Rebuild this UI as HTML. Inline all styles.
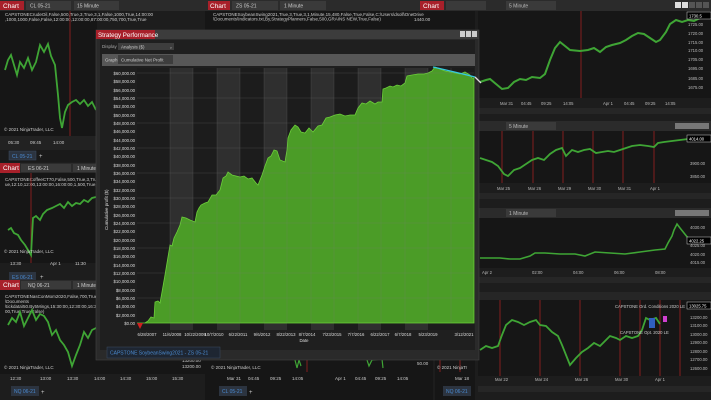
<!DOCTYPE html>
<html><head><meta charset="utf-8"><style>
html,body{margin:0;padding:0;background:#1c1c1c;width:711px;height:400px;overflow:hidden;font-family:"Liberation Sans",sans-serif}
svg{display:block}
text{font-family:"Liberation Sans",sans-serif}
</style></head><body>
<svg width="711" height="400" viewBox="0 0 711 400" xmlns="http://www.w3.org/2000/svg">
<rect width="711" height="400" fill="#1d1d1d"/>
<g font-size="4.5" fill="#ccc">
<rect x="0" y="0" width="205" height="11" fill="#2b2b2b"/>
<rect x="0" y="1" width="24" height="9" fill="#a8202a"/><text x="3" y="8" font-size="6.5" fill="#fff">Chart</text>
<rect x="26" y="1" width="45" height="9" fill="#3a3a3a"/><text x="30" y="7.5" font-size="5">CL 05-21</text>
<rect x="74" y="1" width="45" height="9" fill="#3a3a3a"/><text x="77" y="7.5" font-size="5">15 Minute</text>
<rect x="0" y="11" width="97" height="125" fill="#161616"/>
<text x="5" y="16">CAPSTONECrudeOil,False,500,True,3,True,3,1,False,1000,True,14:00:00</text>
<text x="5" y="21">,1000,1000,False,False,12:00:00,12:00:00,87:00:00,750,700,True,True</text>
<line x1="70" y1="11" x2="70" y2="136" stroke="#a02020" stroke-width="0.8"/>
<polyline fill="none" stroke="#3fa535" stroke-width="1.8" points="5,70 8,60 11,55 14,65 17,75 20,62 24,68 28,58 32,70 36,62 40,45 44,52 48,44 51,56 55,65 58,95 60,118 62,128 65,112 68,105 72,102 76,100 80,104 84,100 88,106 92,102 96,110"/>
<text x="4" y="131" font-size="4.5">© 2021 NinjaTrader, LLC</text>
<rect x="0" y="136" width="97" height="14" fill="#222"/>
<text x="8" y="144">05:30</text><text x="30" y="144">09:45</text><text x="53" y="144">14:00</text>
<rect x="0" y="150" width="97" height="12" fill="#1a1a1a"/>
<rect x="9" y="151" width="27" height="9" fill="#2c3440" stroke="#3a4a60" stroke-width="0.5"/><text x="12" y="158" font-size="5" fill="#4a8ad0">CL 05-21</text>
<text x="39" y="158" font-size="6">+</text>
<rect x="0" y="163" width="97" height="10" fill="#2b2b2b"/>
<rect x="0" y="163" width="20" height="10" fill="#a8202a"/><text x="3" y="170" font-size="6.5" fill="#fff">Chart</text>
<rect x="21" y="164" width="50" height="8" fill="#3a3a3a"/><text x="28" y="170" font-size="5">ES 06-21</text>
<rect x="73" y="164" width="24" height="8" fill="#3a3a3a"/><text x="77" y="170" font-size="5">1 Minute</text>
<rect x="0" y="173" width="97" height="90" fill="#161616"/>
<text x="5" y="181">CAPSTONECoffeeCT70,False,500,True,3,True,3,1,M</text>
<text x="5" y="186">ue,12:10,12:00,13:00:00,16:00:00,1,500,True,600,F</text>
<line x1="31" y1="173" x2="31" y2="263" stroke="#a02020" stroke-width="0.8"/>
<polyline fill="none" stroke="#3fa535" stroke-width="1.8" points="8,230 11,228 14,233 18,235 21,240 25,245 28,250 31,255 33,218 36,216 40,220 43,214 47,210 52,208 56,206 60,204 64,208 68,202 72,206 76,203 80,204 84,200 88,202 92,198 96,197"/>
<text x="4" y="253">© 2021 NinjaTrader, LLC</text>
<text x="10" y="265">13:30</text><text x="50" y="265">Apr 1</text><text x="75" y="265">11:30</text>
<rect x="9" y="272" width="27" height="9" fill="#2c3440"/><text x="12" y="279" font-size="5" fill="#4a8ad0">ES 06-21</text>
<text x="40" y="279" font-size="6">+</text>
<rect x="0" y="280" width="205" height="10" fill="#2b2b2b"/>
<rect x="0" y="280" width="20" height="10" fill="#a8202a"/><text x="3" y="287" font-size="6.5" fill="#fff">Chart</text>
<rect x="21" y="281" width="50" height="8" fill="#3a3a3a"/><text x="28" y="287" font-size="5">NQ 06-21</text>
<rect x="73" y="281" width="24" height="8" fill="#3a3a3a"/><text x="77" y="287" font-size="5">1 Minute</text>
<rect x="0" y="290" width="205" height="84" fill="#161616"/>
<text x="5" y="298">CAPSTONENasConMom2020,False,700,True,3,1,F</text>
<text x="5" y="303">\Documents</text>
<text x="5" y="308">\tickdata\50.By5Mings,15:30:00,12:30:00,16:30:00,</text>
<text x="5" y="313">00,True,True,False)</text>
<polyline fill="none" stroke="#3fa535" stroke-width="1.8" points="8,325 12,318 16,322 20,312 24,326 28,318 32,310 36,320 40,314 44,316 48,322 52,335 56,330 60,340 64,345 68,352 72,366 76,355 80,345 84,332 88,338 92,330 96,328 100,325"/>
<text x="4" y="369">© 2021 NinjaTrader, LLC</text>
<text x="182" y="362">13200.00</text><text x="182" y="368">13200.00</text>
<text x="10" y="380">12:30</text><text x="40" y="380">13:00</text><text x="67" y="380">13:30</text><text x="94" y="380">14:00</text><text x="120" y="380">14:30</text><text x="146" y="380">15:00</text><text x="172" y="380">15:30</text>
<rect x="11" y="386" width="28" height="10" fill="#2c3440"/><text x="14" y="393" font-size="5" fill="#4a8ad0">NQ 06-21</text>
<text x="41" y="394" font-size="6">+</text>
</g>
<g font-size="4.5" fill="#ccc">
<rect x="205" y="0" width="270" height="11" fill="#2b2b2b"/>
<rect x="208" y="1" width="22" height="9" fill="#a8202a"/><text x="210" y="8" font-size="6.5" fill="#fff">Chart</text>
<rect x="232" y="1" width="46" height="9" fill="#3a3a3a"/><text x="236" y="7.5" font-size="5">ZS 05-21</text>
<rect x="280" y="1" width="46" height="9" fill="#3a3a3a"/><text x="284" y="7.5" font-size="5">1 Minute</text>
<rect x="205" y="11" width="270" height="20" fill="#161616"/>
<text x="213" y="16">CAPSTONESoybeanSwing2021,True,3,True,3,1,Minute,15,480,False,True,False,C:\Users\dsoll\OneDrive</text>
<text x="213" y="20.5">\Documents\Indicators.txt,By,StrategyPlanners,False,500,GRAINS NEW,True,False)</text>
<text x="414" y="21">1440.00</text>
<rect x="205" y="352" width="228" height="48" fill="#161616"/>
<polyline fill="none" stroke="#3fa535" stroke-width="1.2" points="295,360 297,368 299,360 301,366"/>
<polyline fill="none" stroke="#3fa535" stroke-width="1.2" points="367,360 369,366 372,360 382,359 383,368"/>
<line x1="307" y1="352" x2="307" y2="372" stroke="#a02020" stroke-width="0.8"/>
<text x="211" y="369">© 2021 NinjaTrader, LLC</text>
<text x="417" y="365">50.00</text>
<text x="227" y="380">Mar 31</text><text x="248" y="380">04:45</text><text x="270" y="380">09:25</text><text x="292" y="380">14:05</text><text x="335" y="380">Apr 1</text><text x="355" y="380">04:45</text><text x="375" y="380">09:25</text><text x="397" y="380">14:05</text>
<rect x="219" y="386" width="28" height="10" fill="#2c3440"/><text x="222" y="393" font-size="5" fill="#4a8ad0">CL 05-21</text>
<text x="249" y="394" font-size="6">+</text>
<rect x="435" y="352" width="40" height="48" fill="#161616"/>
<line x1="440" y1="352" x2="440" y2="372" stroke="#a02020" stroke-width="0.8"/><line x1="460" y1="352" x2="460" y2="372" stroke="#a02020" stroke-width="0.8"/>
<text x="437" y="369">© 2021 NinjaTr</text><text x="455" y="380">Mar 18</text>
<rect x="443" y="386" width="28" height="10" fill="#2c3440"/><text x="446" y="393" font-size="5" fill="#4a8ad0">NQ 06-21</text>
</g>
<g font-size="4.2" fill="#bbb">
<rect x="420" y="0" width="291" height="11" fill="#2b2b2b"/>
<rect x="420" y="1" width="24" height="9" fill="#a8202a"/><text x="423" y="8" font-size="6.5" fill="#fff">Chart</text>
<rect x="446" y="1" width="40" height="9" fill="#3a3a3a"/>
<rect x="506" y="1" width="50" height="9" fill="#3a3a3a"/><text x="509" y="7.5" font-size="5">5 Minute</text>
<g fill="#ddd"><rect x="675" y="2" width="6" height="6"/><rect x="682" y="2" width="6" height="6"/><rect x="689" y="2" width="6" height="6" fill="#555"/><rect x="696" y="2" width="6" height="6" fill="#555"/><rect x="703" y="2" width="6" height="6" fill="#555"/></g>
<rect x="478" y="11" width="233" height="87" fill="#161616"/>
<line x1="581" y1="11" x2="581" y2="98" stroke="#a02020" stroke-width="0.8"/>
<polyline fill="none" stroke="#3fa535" stroke-width="2" points="480,82 486,80 490,79 496,84 502,89 508,88 514,82 520,79 526,80 532,77 540,78 545,74 550,60 555,48 560,42 565,46 570,50 580,51 588,50 594,48 600,52 606,47 612,45 620,43 626,40 632,36 638,33 644,34 650,38 656,42 660,40 666,32 670,24 676,20 682,22 688,20 694,21 700,18 705,15 709,16"/>
<g><text x="688" y="26">1725.00</text><text x="688" y="35">1720.00</text><text x="688" y="44">1715.00</text><text x="688" y="52">1710.00</text><text x="688" y="61">1705.00</text><text x="688" y="70">1695.00</text><text x="688" y="80">1685.00</text><text x="688" y="89">1675.00</text></g>
<rect x="687" y="12" width="24" height="7" fill="#000" stroke="#ccc" stroke-width="0.5"/><text x="689" y="17.5" fill="#fff">1730.5</text>
<text x="500" y="105">Mar 31</text><text x="521" y="105">04:45</text><text x="541" y="105">09:25</text><text x="563" y="105">14:05</text><text x="603" y="105">Apr 1</text><text x="624" y="105">04:45</text><text x="645" y="105">09:25</text><text x="665" y="105">14:05</text>
<rect x="478" y="108" width="233" height="6" fill="#262626"/>
<rect x="478" y="121" width="233" height="10" fill="#2b2b2b"/>
<rect x="506" y="122" width="50" height="8" fill="#3a3a3a"/><text x="509" y="128" font-size="5">5 Minute</text>
<rect x="675" y="123" width="34" height="6" fill="#777"/>
<rect x="478" y="131" width="233" height="52" fill="#161616"/>
<g stroke="#a02020" stroke-width="0.8"><line x1="502" y1="131" x2="502" y2="183"/><line x1="533" y1="131" x2="533" y2="183"/><line x1="563" y1="131" x2="563" y2="183"/><line x1="593" y1="131" x2="593" y2="183"/><line x1="623" y1="131" x2="623" y2="183"/><line x1="654" y1="131" x2="654" y2="183"/></g>
<polyline fill="none" stroke="#3fa535" stroke-width="1.8" points="480,158 486,160 492,162 498,166 504,174 508,176 514,170 520,168 526,164 532,160 538,158 544,160 550,154 556,150 562,148 566,156 572,150 578,152 584,150 590,149 596,153 602,152 608,151 614,152 620,150 626,148 632,146 640,145 648,146 654,147 658,143 664,142 672,141 680,140 688,139 692,136"/>
<rect x="687" y="135" width="24" height="7" fill="#000" stroke="#ccc" stroke-width="0.5"/><text x="689" y="140.5" fill="#fff">4014.00</text>
<text x="690" y="165">3900.00</text><text x="690" y="178">3850.00</text>
<text x="497" y="190">Mar 25</text><text x="528" y="190">Mar 26</text><text x="558" y="190">Mar 29</text><text x="588" y="190">Mar 30</text><text x="618" y="190">Mar 31</text><text x="650" y="190">Apr 1</text>
<rect x="478" y="193" width="233" height="6" fill="#262626"/>
<rect x="478" y="208" width="233" height="10" fill="#2b2b2b"/>
<rect x="506" y="209" width="50" height="8" fill="#3a3a3a"/><text x="509" y="215" font-size="5">1 Minute</text>
<rect x="675" y="210" width="34" height="6" fill="#777"/>
<rect x="478" y="218" width="233" height="50" fill="#161616"/>
<polyline fill="none" stroke="#3fa535" stroke-width="1.6" points="480,258 500,258 510,259 520,259 530,256 535,253 545,253 560,254 575,254 585,256 595,252 610,253 625,254 640,252 655,250 665,249 668,243 672,236 674,230 677,224 680,228 684,233 688,238 690,240"/>
<rect x="687" y="237" width="24" height="7" fill="#000" stroke="#ccc" stroke-width="0.5"/><text x="689" y="242.5" fill="#fff">4022.25</text>
<text x="690" y="229">4030.00</text><text x="690" y="247">4025.00</text><text x="690" y="256">4020.00</text><text x="690" y="264">4015.00</text>
<text x="482" y="274">Apr 2</text><text x="532" y="274">02:00</text><text x="573" y="274">04:00</text><text x="614" y="274">06:00</text><text x="655" y="274">08:00</text>
<rect x="478" y="277" width="233" height="6" fill="#262626"/>
<rect x="478" y="292" width="233" height="8" fill="#262626"/>
<rect x="478" y="300" width="233" height="76" fill="#161616"/>
<g stroke="#a02020" stroke-width="0.8"><line x1="500" y1="300" x2="500" y2="376"/><line x1="540" y1="300" x2="540" y2="376"/><line x1="580" y1="300" x2="580" y2="376"/><line x1="620" y1="300" x2="620" y2="376"/><line x1="640" y1="300" x2="640" y2="376"/><line x1="660" y1="300" x2="660" y2="376"/><line x1="680" y1="300" x2="680" y2="376"/></g>
<polyline fill="none" stroke="#3fa535" stroke-width="1.8" points="480,350 486,346 492,348 498,346 502,335 506,325 512,320 518,322 524,325 530,322 536,320 540,325 546,326 552,332 558,336 562,345 566,355 570,365 576,358 582,352 588,348 594,343 600,346 606,340 610,336 616,338 620,340 626,336 632,338 638,336 642,330 646,318 650,320 656,318 660,324"/>
<rect x="649" y="318" width="6" height="10" fill="#3060c0"/><rect x="663" y="316" width="4" height="6" fill="#d040d0"/>
<text x="615" y="308" fill="#ccc">CAPSTONE Ord. Conditions 2020 LE</text>
<text x="620" y="334" fill="#ccc">CAPSTONE Opt. 2020 LE</text>
<rect x="687" y="302" width="24" height="7" fill="#000" stroke="#ccc" stroke-width="0.5"/><text x="689" y="307.5" fill="#fff">13025.75</text>
<text x="690" y="319">13200.00</text><text x="690" y="327">13100.00</text><text x="690" y="336">13000.00</text><text x="690" y="344">12900.00</text><text x="690" y="353">12800.00</text><text x="690" y="361">12700.00</text><text x="690" y="370">12600.00</text>
<text x="495" y="381">Mar 22</text><text x="535" y="381">Mar 24</text><text x="575" y="381">Mar 26</text><text x="615" y="381">Mar 30</text><text x="655" y="381">Apr 1</text>
<rect x="478" y="386" width="233" height="6" fill="#262626"/>
</g>
<rect x="96" y="30" width="383" height="330" fill="#2a2a2a" stroke="#444" stroke-width="0.6"/>
<rect x="96" y="30" width="383" height="9" fill="#3c3c3c"/>
<rect x="96" y="30" width="59" height="9" fill="#a8202a"/>
<text x="98" y="37" font-size="6.2" fill="#fff">Strategy Performance</text>
<g fill="#ccc"><rect x="460" y="31" width="5" height="6"/><rect x="466" y="31" width="5" height="6"/><rect x="472" y="31" width="5" height="6"/></g>
<rect x="100" y="40" width="375" height="310" fill="#1f1f1f"/>
<text x="102" y="48" font-size="4.5" fill="#aaa">Display</text>
<rect x="118" y="43" width="56" height="7" fill="#3d3d3d"/><text x="121" y="48.5" font-size="4.5" fill="#ccc">Analysis ($)</text><text x="169" y="48.5" font-size="4.5" fill="#ccc">⌄</text>
<rect x="102" y="54" width="373" height="12" fill="#575757"/>
<text x="105" y="61.5" font-size="4.5" fill="#ccc">Graph</text>
<rect x="118" y="55" width="55" height="9" fill="#3d3d3d"/><text x="121" y="61.5" font-size="4.5" fill="#ccc">Cumulative Net Profit</text>
<rect x="137" y="68" width="337" height="262" fill="#1c1c1c"/>
<g fill="#2f2f2f"><rect x="170" y="68" width="23" height="262"/><rect x="217" y="68" width="23" height="262"/><rect x="264" y="68" width="23" height="262"/><rect x="311" y="68" width="23" height="262"/><rect x="358" y="68" width="23" height="262"/><rect x="405" y="68" width="23" height="262"/></g>
<polygon fill="#4b9c27" stroke="#6ccf3a" stroke-width="0.8" points="137,323 145,323 148,321 151,317 154,318 155,302 158,301 160,303 162,292 165,275 168,257 170,245 172,246 174,238 177,232 180,225 182,217 186,218 190,220 195,222 197,212 199,208 201,205 205,203 208,202 212,195 216,195 220,190 223,178 226,176 228,172 232,175 236,176 240,177 244,176 248,179 252,178 256,183 258,185 262,175 265,166 268,158 271,156 274,150 277,151 280,160 285,162 287,150 288,138 291,130 295,125 298,127 301,132 305,133 309,128 313,132 318,126 322,125 326,118 330,117 335,115 340,114 345,116 350,115 355,115 358,108 362,103 366,104 370,101 375,104 378,102 382,102 383,89 386,88 390,86 393,87 397,85 401,86 405,83 407,76 412,75 418,74 424,74 428,73 432,71 435,67 440,69 445,71 450,72 455,73 460,74 465,72 470,75 472,78 474,78 474,323"/>
<g stroke="#7a7a7a" stroke-width="0.4" opacity="0.5">
<line x1="137" y1="73" x2="474" y2="73"/><line x1="137" y1="98" x2="474" y2="98"/><line x1="137" y1="123" x2="474" y2="123"/><line x1="137" y1="148" x2="474" y2="148"/><line x1="137" y1="173" x2="474" y2="173"/><line x1="137" y1="198" x2="474" y2="198"/><line x1="137" y1="223" x2="474" y2="223"/><line x1="137" y1="248" x2="474" y2="248"/><line x1="137" y1="273" x2="474" y2="273"/><line x1="137" y1="298" x2="474" y2="298"/>
<line x1="170" y1="68" x2="170" y2="323"/><line x1="193" y1="68" x2="193" y2="323"/><line x1="217" y1="68" x2="217" y2="323"/><line x1="240" y1="68" x2="240" y2="323"/><line x1="264" y1="68" x2="264" y2="323"/><line x1="287" y1="68" x2="287" y2="323"/><line x1="311" y1="68" x2="311" y2="323"/><line x1="334" y1="68" x2="334" y2="323"/><line x1="358" y1="68" x2="358" y2="323"/><line x1="381" y1="68" x2="381" y2="323"/><line x1="405" y1="68" x2="405" y2="323"/><line x1="428" y1="68" x2="428" y2="323"/><line x1="451" y1="68" x2="451" y2="323"/>
</g>
<polygon points="137,323 143,323 140,329" fill="#d02020"/>
<path d="M433,67 Q455,72 475,77" fill="none" stroke="#35c8e0" stroke-width="1.3"/>
<line x1="475" y1="77" x2="481" y2="83" stroke="#ddd" stroke-width="1.3"/>
<g font-size="4.3" fill="#ddd" text-anchor="end">
<text x="135" y="75">$60,000.00</text><text x="135" y="83">$58,000.00</text><text x="135" y="92">$56,000.00</text><text x="135" y="100">$54,000.00</text><text x="135" y="108">$52,000.00</text><text x="135" y="117">$50,000.00</text><text x="135" y="125">$48,000.00</text><text x="135" y="133">$46,000.00</text><text x="135" y="142">$44,000.00</text><text x="135" y="150">$42,000.00</text><text x="135" y="158">$40,000.00</text><text x="135" y="167">$38,000.00</text><text x="135" y="175">$36,000.00</text><text x="135" y="183">$34,000.00</text><text x="135" y="192">$32,000.00</text><text x="135" y="200">$30,000.00</text><text x="135" y="208">$28,000.00</text><text x="135" y="217">$26,000.00</text><text x="135" y="225">$24,000.00</text><text x="135" y="233">$22,000.00</text><text x="135" y="242">$20,000.00</text><text x="135" y="250">$18,000.00</text><text x="135" y="258">$16,000.00</text><text x="135" y="267">$14,000.00</text><text x="135" y="275">$12,000.00</text><text x="135" y="283">$10,000.00</text><text x="135" y="292">$8,000.00</text><text x="135" y="300">$6,000.00</text><text x="135" y="308">$4,000.00</text><text x="135" y="317">$2,000.00</text><text x="135" y="325">$0.00</text>
</g>
<text x="108" y="230" font-size="4.5" fill="#ddd" transform="rotate(-90 108 230)">Cumulative profit ($)</text>
<g font-size="4.3" fill="#ddd" text-anchor="middle">
<text x="147" y="336">6/28/2007</text><text x="172" y="336">11/6/2008</text><text x="195" y="336">10/22/2009</text><text x="214" y="336">10/7/2010</text><text x="238" y="336">6/22/2011</text><text x="262" y="336">9/6/2012</text><text x="286" y="336">8/22/2013</text><text x="307" y="336">8/7/2014</text><text x="332" y="336">7/23/2015</text><text x="356" y="336">7/7/2016</text><text x="380" y="336">6/22/2017</text><text x="403" y="336">6/7/2018</text><text x="428" y="336">5/23/2019</text><text x="464" y="336">3/12/2021</text>
<text x="304" y="342">Date</text>
</g>
<rect x="107" y="347" width="113" height="11" fill="#1e2632" stroke="#3a4a60" stroke-width="0.5"/>
<text x="110" y="354.5" font-size="5" fill="#4a8ad0">CAPSTONE SoybeanSwing2021 - ZS 05-21</text>
</svg>
</body></html>
